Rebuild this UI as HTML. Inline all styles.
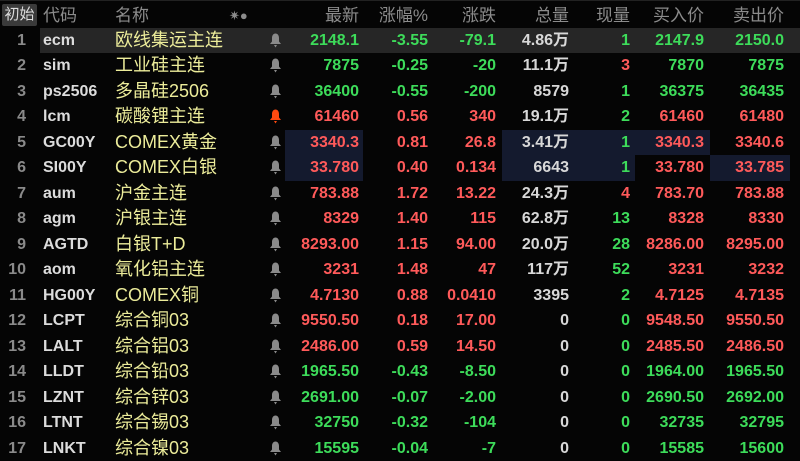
<!DOCTYPE html>
<html><head><meta charset="utf-8"><style>
body{margin:0;width:800px;height:461px;background:#050505;overflow:hidden;position:relative;font-family:"Liberation Sans","Noto Sans CJK SC",sans-serif;}
.hl{position:absolute;background:#141a2e}
.r{position:absolute;left:0;width:800px;height:25.5px;font-size:16px;line-height:25.5px}
.c{position:absolute;top:0;white-space:nowrap}
.n{text-align:right;font-weight:bold}
.g{color:#3ddc5a}.d{color:#ff5a5a}.w{color:#d8d8d8}.y{color:#ecec9a;font-size:18px}
.idx{left:0;width:26px;text-align:right;color:#8a8a8a;font-weight:bold}
.code{left:43px;color:#dcdcdc;font-weight:bold}
.name{left:115px}
.c.bell{left:269px;top:5px;width:13px;height:15px}
.h{color:#8c8c8c;font-size:17px;font-weight:normal}
</style></head><body>
<div style="position:absolute;left:0;top:0;width:800px;height:1px;background:#222"></div>
<div style="position:absolute;left:2px;top:4px;width:35px;height:22px;background:#3a3a3a;border-radius:2px;color:#ddd;font-size:15px;line-height:22px;text-align:center">初始</div>
<div class="hl" style="left:40px;top:27.5px;width:760px;height:25.5px;background:#262626"></div>
<div class="hl" style="left:285px;top:129.5px;width:78px;height:51px"></div>
<div class="hl" style="left:502px;top:129.5px;width:133px;height:51px"></div>
<div class="hl" style="left:635px;top:129.5px;width:75px;height:25.5px"></div>
<div class="hl" style="left:710px;top:155px;width:80px;height:25.5px"></div>
<div id="t"></div>
<script>
const X=[359,428,496,569,630,704,784];
let h='<div class="r" style="top:3px"><span class="c h" style="left:43px">代码</span><span class="c h" style="left:115px">名称</span><span class="c h" style="left:229px;font-size:13px">✷●</span>';
['最新','涨幅%','涨跌','总量','现量','买入价','卖出价'].forEach((t,i)=>h+=`<span class="c h" style="right:${800-X[i]}px">${t}</span>`);
h+='</div>';
const D=[
['ecm','欧线集运主连','g','2148.1','-3.55','-79.1','4.86万','1','2147.9','2150.0','g'],
['sim','工业硅主连','g','7875','-0.25','-20','11.1万','3','7870','7875','g'],
['ps2506','多晶硅2506','g','36400','-0.55','-200','8579','1','36375','36435','g'],
['lcm','碳酸锂主连','d','61460','0.56','340','19.1万','2','61460','61480','g'],
['GC00Y','COMEX黄金','d','3340.3','0.81','26.8','3.41万','1','3340.3','3340.6','g'],
['SI00Y','COMEX白银','d','33.780','0.40','0.134','6643','1','33.780','33.785','g'],
['aum','沪金主连','d','783.88','1.72','13.22','24.3万','4','783.70','783.88','d'],
['agm','沪银主连','d','8329','1.40','115','62.8万','13','8328','8330','g'],
['AGTD','白银T+D','d','8293.00','1.15','94.00','20.0万','28','8286.00','8295.00','g'],
['aom','氧化铝主连','d','3231','1.48','47','117万','52','3231','3232','g'],
['HG00Y','COMEX铜','d','4.7130','0.88','0.0410','3395','2','4.7125','4.7135','g'],
['LCPT','综合铜03','d','9550.50','0.18','17.00','0','0','9548.50','9550.50','g'],
['LALT','综合铝03','d','2486.00','0.59','14.50','0','0','2485.50','2486.50','g'],
['LLDT','综合铅03','g','1965.50','-0.43','-8.50','0','0','1964.00','1965.50','g'],
['LZNT','综合锌03','g','2691.00','-0.07','-2.00','0','0','2690.50','2692.00','g'],
['LTNT','综合锡03','g','32750','-0.32','-104','0','0','32735','32795','g'],
['LNKT','综合镍03','g','15595','-0.04','-7','0','0','15585','15600','g']];
D.forEach((r,i)=>{
 const c=r[2];
 let s=`<div class="r" style="top:${27.5+i*25.5}px"><span class="c idx">${i+1}</span><span class="c code">${r[0]}</span><span class="c name y">${r[1]}</span>`;
 const bc=i==3?'#ff4a10':'#8a8a8a';
 s+=`<svg class="c bell" viewBox="0 0 13 15"><path d="M6.5 0.5 C4.3 0.5 3 2.5 3 5 L3 8.5 L1 11 L12 11 L10 8.5 L10 5 C10 2.5 8.7 0.5 6.5 0.5Z M5 12 L8 12 L6.5 14.5Z" fill="${bc}"/></svg>`;
 const vals=[r[3],r[4],r[5],r[6],r[7],r[8],r[9]];
 const cols=[c,c,c,'w',(r[7]=='3'||r[7]=='4')?'d':'g',c,c];
 vals.forEach((v,j)=>{s+=`<span class="c n ${cols[j]}" style="right:${800-X[j]}px">${v}</span>`});
 h+=s+'</div>';
});
document.getElementById('t').innerHTML=h;
</script>
</body></html>
